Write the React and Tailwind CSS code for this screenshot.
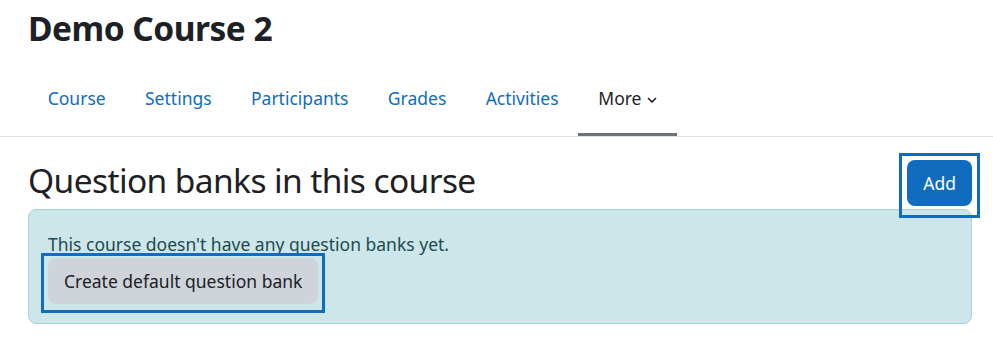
const tabs = ["Course", "Settings", "Participants", "Grades", "Activities"];

const Chevron = () => (
  <svg width="10" height="6" viewBox="0 0 10 6" className="ml-[6px] mt-[2px]">
    <polyline points="1,1 5,5 9,1" fill="none" stroke="#1d2125" strokeWidth="1.6" />
  </svg>
);

const App = () => {
  return (
    <div
      className="w-[993px] h-[354px] bg-white overflow-hidden text-[#1d2125]"
      style={{ fontFamily: '"Noto Sans", "Open Sans", sans-serif' }}
    >
      <div className="pl-[28px] pr-[21px] pt-[7px]">
        <h1 className="text-[33.5px] leading-[42px] font-bold tracking-[-0.5px]">Demo Course 2</h1>
      </div>

      <nav className="mt-[17px] border-b border-[#dee2e6]">
        <ul className="flex h-[70px] pl-[28px] text-[17.5px]">
          {tabs.map((t) => (
            <li key={t} className="flex items-center px-[19.7px] pb-[5px] text-[#0f6cbf]">
              {t}
            </li>
          ))}
          <li className="flex items-center px-[20px] pb-[2px] border-b-[3px] border-[#6a737b]">
            More
            <Chevron />
          </li>
        </ul>
      </nav>

      <div className="pl-[28px] pr-[21px]">
        <div className="flex items-start justify-between mt-[22px]">
          <h2 className="text-[33.5px] leading-[42px] font-normal tracking-[-0.6px]">
            Question banks in this course
          </h2>
          <div className="relative mt-[1px]">
            <button className="h-[46px] px-[16px] rounded-[8px] bg-[#0f6cbf] text-white text-[17.5px]">
              Add
            </button>
            <div className="absolute -top-[7px] -bottom-[12px] -left-[8px] -right-[8px] border-[3px] border-[#0f6cbf]" />
          </div>
        </div>

        <div className="mt-[3px] rounded-[8px] border border-[#a9d3da] bg-[#cce6ea] pl-[19px] pt-[21px] pb-[19px] text-[17.5px] text-[#1d4b52]">
          <p className="leading-[26px]">This course doesn't have any question banks yet.</p>
          <div className="relative inline-block mt-[1px]">
            <button className="h-[46px] px-[16px] rounded-[8px] bg-[#ced4da] text-[#1d2125] text-[17.5px]">
              Create default question bank
            </button>
            <div className="absolute -top-[5px] -bottom-[9px] -left-[7px] -right-[7px] border-[3px] border-[#0f6cbf]" />
          </div>
        </div>
      </div>
    </div>
  );
};

export default App;
